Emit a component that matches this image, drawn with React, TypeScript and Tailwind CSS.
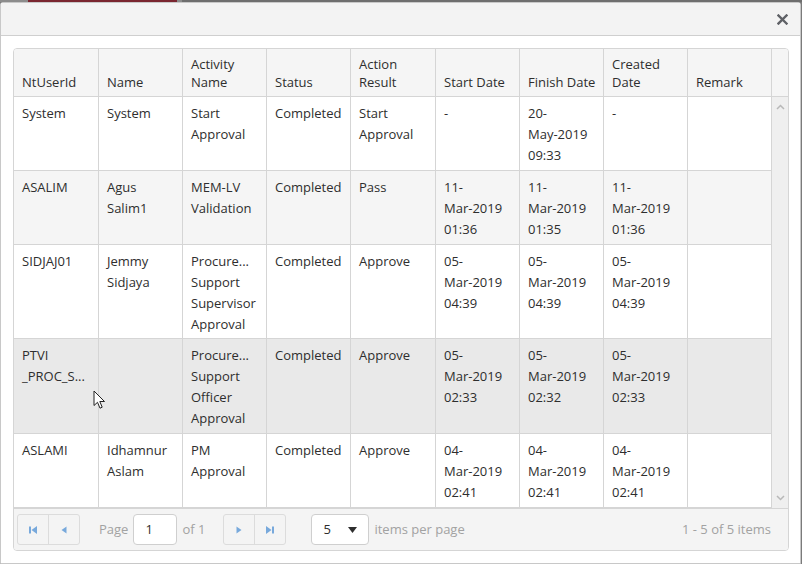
import React from 'react';

type Row = { h: string; bg: string; cells: string[][] };

const headers: string[][] = [
  ['NtUserId'],
  ['Name'],
  ['Activity', 'Name'],
  ['Status'],
  ['Action', 'Result'],
  ['Start Date'],
  ['Finish Date'],
  ['Created', 'Date'],
  ['Remark'],
];

const widths = ['w-[85px]', 'w-[84px]', 'w-[84px]', 'w-[84px]', 'w-[85px]', 'w-[84px]', 'w-[84px]', 'w-[84px]', 'w-[84px]'];

const rows: Row[] = [
  {
    h: 'h-[74px]',
    bg: 'bg-white',
    cells: [['System'], ['System'], ['Start', 'Approval'], ['Completed'], ['Start', 'Approval'], ['-'], ['20-', 'May-2019', '09:33'], ['-'], []],
  },
  {
    h: 'h-[74px]',
    bg: 'bg-[#f5f5f5]',
    cells: [
      ['ASALIM'],
      ['Agus', 'Salim1'],
      ['MEM-LV', 'Validation'],
      ['Completed'],
      ['Pass'],
      ['11-', 'Mar-2019', '01:36'],
      ['11-', 'Mar-2019', '01:35'],
      ['11-', 'Mar-2019', '01:36'],
      [],
    ],
  },
  {
    h: 'h-[94px]',
    bg: 'bg-white',
    cells: [
      ['SIDJAJ01'],
      ['Jemmy', 'Sidjaya'],
      ['Procure...', 'Support', 'Supervisor', 'Approval'],
      ['Completed'],
      ['Approve'],
      ['05-', 'Mar-2019', '04:39'],
      ['05-', 'Mar-2019', '04:39'],
      ['05-', 'Mar-2019', '04:39'],
      [],
    ],
  },
  {
    h: 'h-[95px]',
    bg: 'bg-[#e9e9e9]',
    cells: [
      ['PTVI', '_PROC_S...'],
      [],
      ['Procure...', 'Support', 'Officer', 'Approval'],
      ['Completed'],
      ['Approve'],
      ['05-', 'Mar-2019', '02:33'],
      ['05-', 'Mar-2019', '02:32'],
      ['05-', 'Mar-2019', '02:33'],
      [],
    ],
  },
  {
    h: 'h-[74px]',
    bg: 'bg-white',
    cells: [
      ['ASLAMI'],
      ['Idhamnur', 'Aslam'],
      ['PM', 'Approval'],
      ['Completed'],
      ['Approve'],
      ['04-', 'Mar-2019', '02:41'],
      ['04-', 'Mar-2019', '02:41'],
      ['04-', 'Mar-2019', '02:41'],
      [],
    ],
  },
];

function PagerIcon({ kind }: { kind: 'first' | 'prev' | 'next' | 'last' }) {
  return (
    <svg width="10" height="10" viewBox="0 0 10 10" fill="#78a9dc">
      {kind === 'first' && (
        <>
          <rect x="1" y="1.5" width="2" height="7" />
          <polygon points="9,1 3.5,5 9,9" />
        </>
      )}
      {kind === 'prev' && <polygon points="7.5,1.5 2.5,5 7.5,8.5" />}
      {kind === 'next' && <polygon points="2.5,1.5 7.5,5 2.5,8.5" />}
      {kind === 'last' && (
        <>
          <polygon points="1,1 6.5,5 1,9" />
          <rect x="7" y="1.5" width="2" height="7" />
        </>
      )}
    </svg>
  );
}

function PagerGroup({ a, b }: { a: 'first' | 'prev' | 'next' | 'last'; b: 'first' | 'prev' | 'next' | 'last' }) {
  return (
    <div className="flex h-[31px] rounded-[3px] border border-[#dcdcdc]">
      <div className="flex w-[31px] items-center justify-center border-r border-[#dcdcdc]">
        <PagerIcon kind={a} />
      </div>
      <div className="flex w-[30px] items-center justify-center">
        <PagerIcon kind={b} />
      </div>
    </div>
  );
}

export default function App() {
  return (
    <div className="relative flex h-[564px] w-[802px] flex-col overflow-hidden bg-[#7b7b7b] font-['Open_Sans',sans-serif] text-[13px] text-[#2e2e2e]">
      {/* page behind the dialog */}
      <div className="flex h-[2px] shrink-0">
        <div className="w-[28px] bg-[#8c8c8c]" />
        <div className="w-[149px] bg-[#7a2630]" />
        <div className="w-[5px] bg-[#8c8c8c]" />
        <div className="flex-1 bg-[#6e6e6e]" />
      </div>

      {/* dialog */}
      <div className="flex h-[562px] w-[801px] flex-col rounded-t-[3px] border border-[#c8c8c8] bg-white">
        <div className="flex h-[33px] shrink-0 items-center justify-end border-b border-[#cfcfcf] bg-[#f3f3f3] pr-[12px]">
          <svg width="11" height="11" viewBox="0 0 11 11">
            <path d="M1.5 1.5 L9.5 9.5 M9.5 1.5 L1.5 9.5" stroke="#5f6166" strokeWidth="2.4" strokeLinecap="square" />
          </svg>
        </div>

        <div className="px-[12px] pt-[12px]">
          <div className="flex w-[776px] flex-col overflow-hidden rounded-[4px] border border-[#d5d5d5]">
            {/* header */}
            <div className="flex h-[48px] border-b border-[#d5d5d5] bg-[#f5f5f5]">
              {headers.map((h, i) => (
                <div
                  key={i}
                  className={`${widths[i]} flex shrink-0 flex-col justify-end border-r border-[#d5d5d5] px-[8px] pb-[5px] leading-[18px]`}
                >
                  {h.map((l) => (
                    <span key={l} className="whitespace-nowrap">
                      {l}
                    </span>
                  ))}
                </div>
              ))}
              <div className="flex-1" />
            </div>

            {/* body */}
            <div className="flex h-[411px] overflow-hidden">
              <div className="flex w-[758px] shrink-0 flex-col">
                {rows.map((r, ri) => (
                  <div key={ri} className={`${r.h} ${r.bg} flex shrink-0 border-b border-[#d5d5d5]`}>
                    {r.cells.map((c, ci) => (
                      <div
                        key={ci}
                        className={`${widths[ci]} flex shrink-0 flex-col overflow-hidden border-r border-[#d5d5d5] px-[8px] pt-[6px] leading-[21px]`}
                      >
                        {c.map((l, li) => (
                          <span key={li} className="whitespace-nowrap">
                            {l}
                          </span>
                        ))}
                      </div>
                    ))}
                  </div>
                ))}
              </div>
              <div className="flex flex-1 flex-col items-center justify-between bg-[#efefef] py-[7px]">
                <svg width="9" height="6" viewBox="0 0 9 6">
                  <path d="M1 5 L4.5 1.5 L8 5" fill="none" stroke="#b8b8b8" strokeWidth="1.5" />
                </svg>
                <svg width="9" height="6" viewBox="0 0 9 6">
                  <path d="M1 1 L4.5 4.5 L8 1" fill="none" stroke="#b8b8b8" strokeWidth="1.5" />
                </svg>
              </div>
            </div>

            {/* pager */}
            <div className="flex h-[42px] items-center border-t border-[#d5d5d5] bg-[#f4f4f4] pl-[3px] pr-[17px] text-[#a2a2a2]">
              <PagerGroup a="first" b="prev" />
              <span className="ml-[19px]">Page</span>
              <div className="ml-[5px] flex h-[31px] w-[44px] items-center rounded-[4px] border border-[#cfcfcf] bg-white pl-[11px] text-[#2e2e2e]">
                1
              </div>
              <span className="ml-[5px]">of 1</span>
              <div className="ml-[18px]">
                <PagerGroup a="next" b="last" />
              </div>
              <div className="ml-[25px] flex h-[31px] w-[58px] items-center justify-between rounded-[4px] border border-[#cfcfcf] bg-white pl-[11px] pr-[11px] text-[#2e2e2e]">
                <span>5</span>
                <svg width="9" height="6" viewBox="0 0 9 6">
                  <polygon points="0,0 9,0 4.5,6" fill="#2e2e2e" />
                </svg>
              </div>
              <span className="ml-[5px]">items per page</span>
              <span className="ml-auto">1 - 5 of 5 items</span>
            </div>
          </div>
        </div>
      </div>

      {/* mouse pointer */}
      <svg className="absolute left-[93px] top-[390px]" width="13" height="20" viewBox="0 0 13 20">
        <path d="M1 1 L1 15.5 L4.5 12.3 L7 18.2 L9.2 17.2 L6.8 11.5 L11.5 11.5 Z" fill="#fff" stroke="#222" strokeWidth="1" strokeLinejoin="round" />
      </svg>
    </div>
  );
}
